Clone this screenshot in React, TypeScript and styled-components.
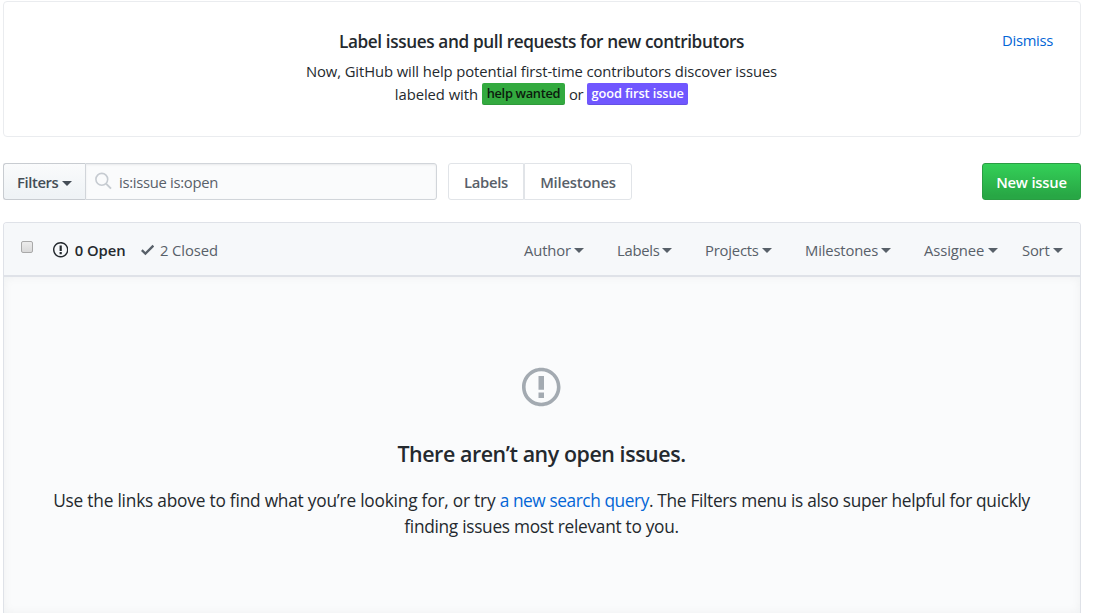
import React from "react";
import styled, { createGlobalStyle } from "styled-components";

const GlobalStyle = createGlobalStyle`
  * { box-sizing: border-box; }
  html, body { margin: 0; height: 613px; overflow: hidden; background: #fff; }
  body {
    font-family: "Open Sans", "Noto Sans", sans-serif;
    font-size: 14.8px;
    line-height: 23px;
    color: #24292e;
  }
`;

const Page = styled.main`
  width: 1078px;
  height: 613px;
  margin-left: 3px;
  padding-top: 1px;
  overflow: hidden;
  display: flex;
  flex-direction: column;
`;

const Text = styled.span<{ $ls?: number }>`
  white-space: nowrap;
  letter-spacing: ${(p) => p.$ls ?? 0}px;
`;

const Banner = styled.section`
  flex: none;
  display: grid;
  grid-template-columns: 1fr auto 1fr;
  height: 136px;
  padding: 26px 27px 0 26px;
  border: 1px solid #eaecef;
  border-radius: 4px;
`;

const BannerBody = styled.div`
  grid-column: 2;
  display: flex;
  flex-direction: column;
  align-items: center;
`;

const BannerTitle = styled.h2`
  margin: 0 0 5px;
  font-size: 17.2px;
  line-height: 27px;
  font-weight: 600;
`;

const BannerLine = styled.div`
  display: flex;
  align-items: center;
  height: 23px;
`;

const Badge = styled.span<{ $bg: string; $fg: string; $width: number }>`
  display: flex;
  justify-content: center;
  width: ${(p) => p.$width}px;
  height: 22px;
  margin: -2px 4px 0;
  border-radius: 2px;
  background: ${(p) => p.$bg};
  color: ${(p) => p.$fg};
  box-shadow: inset 0 -1px 0 rgba(27, 31, 35, 0.12);
  font-size: 12.8px;
  line-height: 21px;
  font-weight: 600;

  &:last-child {
    margin-right: 0;
  }
`;

const Link = styled.a`
  color: #0366d6;
  text-decoration: none;
`;

const QueryLink = styled(Link)`
  letter-spacing: -0.42px;
`;

const Dismiss = styled(Link)`
  justify-self: end;
  line-height: 24px;
`;

const Toolbar = styled.div`
  flex: none;
  display: flex;
  height: 37px;
  margin-top: 26px;
`;

const Button = styled.button`
  height: 37px;
  padding: 2px 0 0;
  border: 1px solid #e1e4e8;
  background: #fff;
  color: #586069;
  font: 600 14.8px/33px "Open Sans", "Noto Sans", sans-serif;
`;

const FiltersButton = styled(Button)`
  display: flex;
  align-items: center;
  justify-content: space-between;
  width: 82px;
  padding: 2px 13px 0 13px;
  border-color: #c8ccd1;
  border-right: 0;
  border-radius: 3px 0 0 3px;
  background: linear-gradient(#fafbfc, #eff3f6 90%);
  color: #444d56;
`;

const Caret = styled.i`
  width: 0;
  height: 0;
  margin-top: 1px;
  border: 5px solid transparent;
  border-top-color: currentColor;
  border-bottom: 0;
`;

const Search = styled.div`
  display: flex;
  align-items: center;
  width: 352px;
  padding: 2px 0 0 9px;
  border: 1px solid #d1d5da;
  border-radius: 0 3px 3px 0;
  background: #fafbfc;
  box-shadow: inset 0 1px 2px rgba(27, 31, 35, 0.075);
  color: #586069;
`;

const SearchIcon = styled.svg`
  width: 17px;
  height: 18px;
  margin: -4px 7px 0 0;
`;

const LabelsButton = styled(Button)`
  width: 76px;
  margin-left: 11px;
  border-radius: 3px 0 0 3px;
`;

const MilestonesButton = styled(Button)`
  width: 108px;
  border-radius: 0 3px 3px 0;
`;

const NewIssueButton = styled(Button)`
  width: 99px;
  margin-left: auto;
  border-color: #2a9d43;
  border-radius: 3px;
  background: linear-gradient(#34d058, #28a745 90%);
  color: #fff;
`;

const List = styled.section`
  flex: 1;
  display: flex;
  flex-direction: column;
  margin-top: 22px;
  border: 1px solid #dfe2e8;
  border-bottom: 0;
  border-radius: 4px 4px 0 0;
`;

const ListHeader = styled.header`
  flex: none;
  display: flex;
  align-items: center;
  height: 54px;
  padding: 2px 17px 0;
  border-bottom: 2px solid #dfe2e8;
  border-radius: 3px 3px 0 0;
  background: #f6f8fa;
  color: #586069;
`;

const Checkbox = styled.span`
  width: 12px;
  height: 12px;
  margin-top: -7px;
  border: 1px solid #a9a9a9;
  border-radius: 2px;
  background: linear-gradient(#ececec, #d9d9d9);
`;

const State = styled.a<{ $width: number; $gap: number; $selected?: boolean }>`
  display: flex;
  align-items: center;
  justify-content: space-between;
  width: ${(p) => p.$width}px;
  margin-left: ${(p) => p.$gap}px;
  color: ${(p) => (p.$selected ? "#24292e" : "#586069")};
  font-weight: ${(p) => (p.$selected ? 600 : 400)};
`;

const Menus = styled.nav`
  display: flex;
  margin-left: auto;
`;

const Menu = styled.a<{ $width: number; $gap: number }>`
  display: flex;
  align-items: center;
  justify-content: space-between;
  width: ${(p) => p.$width}px;
  margin-left: ${(p) => p.$gap}px;
`;

const Blank = styled.div`
  flex: 1;
  display: flex;
  flex-direction: column;
  align-items: center;
  padding: 88px 1px 0 0;
  background: #fafbfc;
  box-shadow: inset 0 0 10px rgba(27, 31, 35, 0.05);
  font-size: 17.3px;
  line-height: 26px;
`;

const BlankTitle = styled.h3`
  margin: 28px 0 18px;
  font-size: 21.4px;
  line-height: 33px;
  font-weight: 600;
`;

const IssueIcon = ({ width, color }: { width: number; color: string }) => (
  <svg width={width} height={(width * 16) / 14} viewBox="0 0 14 16" fill={color}>
    <path
      fillRule="evenodd"
      d="M7 2.3c3.14 0 5.7 2.56 5.7 5.7s-2.56 5.7-5.7 5.7A5.71 5.71 0 0 1 1.3 8c0-3.14 2.56-5.7 5.7-5.7zM7 1C3.14 1 0 4.14 0 8s3.14 7 7 7 7-3.14 7-7-3.14-7-7-7zm1 3H6v5h2V4zm0 6H6v2h2v-2z"
    />
  </svg>
);

const CheckIcon = () => (
  <svg width="13.2" height="17.6" viewBox="0 0 12 16" fill="#586069">
    <path d="M12 5l-8 8-4-4 1.5-1.5L4 10l6.5-6.5z" />
  </svg>
);

const menus = [
  { name: "Author", width: 60, gap: 0, ls: -0.15 },
  { name: "Labels", width: 55, gap: 33, ls: -0.25 },
  { name: "Projects", width: 67, gap: 33, ls: -0.2 },
  { name: "Milestones", width: 86, gap: 33, ls: -0.17 },
  { name: "Assignee", width: 74, gap: 33, ls: -0.1 },
  { name: "Sort", width: 41, gap: 24, ls: -0.2 },
];

export default function App() {
  return (
    <>
      <GlobalStyle />
      <Page>
        <Banner>
          <BannerBody>
            <BannerTitle>
              <Text $ls={-0.38}>Label issues and pull requests for new contributors</Text>
            </BannerTitle>
            <BannerLine>
              <Text $ls={-0.09}>
                Now, GitHub will help potential first-time contributors discover issues
              </Text>
            </BannerLine>
            <BannerLine>
              <Text $ls={-0.06}>labeled with</Text>
              <Badge $bg="#33aa3f" $fg="#0b1a0d" $width={83}>
                <Text $ls={-0.3}>help wanted</Text>
              </Badge>
              <Text $ls={-0.4}>or</Text>
              <Badge $bg="#7057ff" $fg="#fff" $width={101}>
                <Text $ls={-0.1}>good first issue</Text>
              </Badge>
            </BannerLine>
          </BannerBody>
          <Dismiss>
            <Text $ls={-0.3}>Dismiss</Text>
          </Dismiss>
        </Banner>

        <Toolbar>
          <FiltersButton>
            <Text $ls={-0.4}>Filters</Text>
            <Caret />
          </FiltersButton>
          <Search>
            <SearchIcon viewBox="0 0 17 18" fill="none" stroke="#c6cbd1" strokeWidth="1.6">
              <circle cx="6.8" cy="7.3" r="5.9" />
              <path d="M11 11.6l5 5" strokeWidth="2" />
            </SearchIcon>
            <Text $ls={-0.3}>is:issue is:open</Text>
          </Search>
          <LabelsButton>
            <Text $ls={-0.3}>Labels</Text>
          </LabelsButton>
          <MilestonesButton>
            <Text $ls={-0.2}>Milestones</Text>
          </MilestonesButton>
          <NewIssueButton>
            <Text $ls={-0.2}>New issue</Text>
          </NewIssueButton>
        </Toolbar>

        <List>
          <ListHeader>
            <Checkbox />
            <State $width={72.5} $gap={20} $selected>
              <IssueIcon width={15.4} color="#24292e" />
              <Text $ls={-0.05}>0 Open</Text>
            </State>
            <State $width={77.5} $gap={15}>
              <CheckIcon />
              <Text $ls={-0.08}>2 Closed</Text>
            </State>
            <Menus>
              {menus.map((m) => (
                <Menu key={m.name} $width={m.width} $gap={m.gap}>
                  <Text $ls={m.ls}>{m.name}</Text>
                  <Caret />
                </Menu>
              ))}
            </Menus>
          </ListHeader>
          <Blank>
            <IssueIcon width={38.5} color="#a3aab1" />
            <BlankTitle>
              <Text $ls={-0.43}>There aren’t any open issues.</Text>
            </BlankTitle>
            <Text $ls={-0.21}>
              Use the links above to find what you’re looking for, or try{" "}
              <QueryLink>a new search query</QueryLink>
              <Text $ls={-0.31}>. The Filters menu is also super helpful for quickly</Text>
            </Text>
            <Text $ls={-0.29}>finding issues most relevant to you.</Text>
          </Blank>
        </List>
      </Page>
    </>
  );
}
